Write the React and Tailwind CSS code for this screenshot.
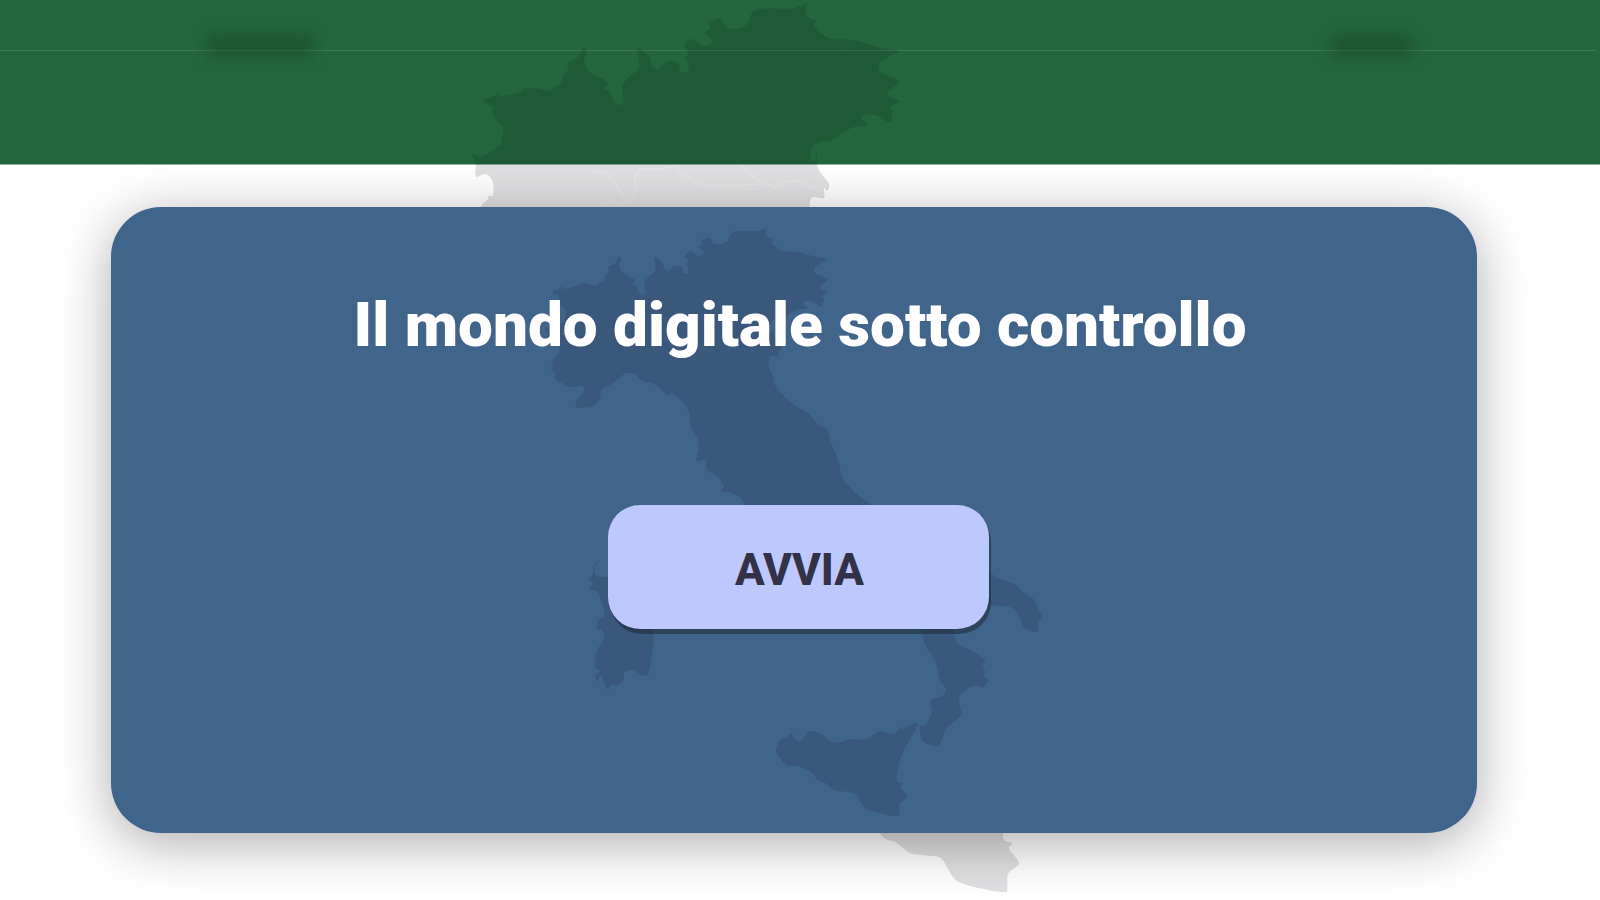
import { useId } from 'react'

// Profili della mappa, coordinate nel viewBox 752x888
const PENISOLA = `0,150 10,152 20,147 29,140 30,134 31,124 24,116 21,110 20,102 13,100 12,95 19,94 27,88 29,92 49,88 51,85
64,84 78,87 82,83 88,81 91,72 97,65 95,59 105,54 111,44 115,47 112,57 117,67 135,78 132,84 139,89 142,98 147,101 152,97
150,84 155,75 166,65 167,57 165,47 167,44 177,52 180,62 186,65 194,58 200,57 207,60 208,67 215,68 217,62 213,54 217,50
212,42 219,35 225,38 230,42 239,40 239,34 233,29 238,24 237,18 249,15 255,24 267,24 275,20 280,9 289,5 302,4 310,5 322,4
335,0 333,7 337,14 344,17 342,22 350,30 360,35 380,36 410,44 427,47 417,53 407,60 409,69 427,77 415,90 427,97 418,103
421,107 419,117 415,118 407,112 395,110 389,114 396,121 382,123 372,128 360,136 347,138 340,144 339,156 343,157 345,147
346,164 357,180 355,187 352,184 352,194 342,193 338,197 338,210 345,225 346,235 355,248 375,266 395,278 405,288 412,297
422,301 428,310 433,328 443,351 448,374 460,391 493,418 540,430 575,425 570,445 620,480 674,522 687,530 709,538 719,548
737,560 743,572 751,587 745,595 745,608 740,610 724,604 714,583 704,573 674,570 640,575 618,590 618,615 626,630 644,638
664,653 661,661 665,671 662,677 669,683 661,694 647,691 629,703 625,716 628,736 606,756 596,780 584,781 570,774 566,754
576,749 584,731 582,714 601,706 605,696 596,681 589,653 576,633 569,613 560,590 520,560 500,520 440,500 400,470 340,450
303,419 294,406 279,399 264,398 270,390 259,374 244,365 242,350 229,352 232,331 229,316 220,301 217,276 206,260 191,249
186,253 166,236 148,232 136,221 123,219 110,228 100,236 85,244 83,258 70,270 48,271 47,263 59,245 55,238 40,240 17,229
15,218 9,215 13,206 9,202 16,195 16,192 21,191 21,179 17,172 12,170 5,173 3,169 4,159`

const SICILIA = `349,791 355,774 366,769 371,762 377,771 387,774 397,761 407,760 418,765 433,776 443,777 460,772 485,772
506,760 528,764 536,754 541,757 558,748 563,751 546,781 536,804 531,834 540,839 537,845 547,859 536,870 535,887 528,888
516,886 485,877 470,855 460,852 438,849 425,839 412,834 402,822 380,812 365,811`

const SARDEGNA = `82,502 75,510 75,520 80,525 100,526 125,505 150,500 165,530 160,570 164,608 163,633 156,673 146,675
133,667 120,671 118,683 108,692 100,689 94,697 85,676 79,684 75,676 83,669 75,662 79,638 90,618 85,607 79,607 80,593
90,585 86,567 80,550 67,546 73,537 67,531 72,522 74,508`

const CONFINI = [
  '31,122 48,119 64,119 72,120 78,111 78,98',
  '127,86 120,96 119,108 124,122 131,134 118,140 113,147 115,157 122,168 134,169 144,181 152,194 152,203 163,190 163,174 169,165 187,165 204,162 207,168 220,175 230,181 260,181 294,180 304,183 317,177 330,178 352,190',
  '243,55 242,72 236,88 236,98 242,105 258,102 264,112 271,116 277,112 282,99 294,90 316,84 322,74 317,60',
  '258,102 246,116 244,140 262,154 287,177 304,183',
  '374,38 368,60 349,65 356,80 353,95 362,107 380,106 390,112',
  '133,203 139,197 152,203 180,214 215,226 250,232'
]

// curva morbida che passa per tutti i punti
function curva(testo, chiusa) {
  const p = testo.trim().split(/\s+/).map(c => c.split(',').map(Number))
  const n = p.length
  const at = i => (chiusa ? p[(i + n) % n] : p[Math.max(0, Math.min(n - 1, i))])
  let d = `M${p[0]}`
  for (let i = 0; i < (chiusa ? n : n - 1); i++) {
    const [a, b, c, e] = [at(i - 1), at(i), at(i + 1), at(i + 2)]
    d += `C${b[0] + (c[0] - a[0]) / 7},${b[1] + (c[1] - a[1]) / 7} ${c[0] - (e[0] - b[0]) / 7},${c[1] - (e[1] - b[1]) / 7} ${c}`
  }
  return chiusa ? d + 'Z' : d
}

function Italia({ className }) {
  const id = useId()
  return (
    <svg viewBox="0 0 752 888" className={className} aria-hidden="true">
      <mask id={id} maskUnits="userSpaceOnUse" x="0" y="0" width="752" height="888">
        <rect width="752" height="888" fill="white" />
        {CONFINI.map(c => <path key={c} d={curva(c, false)} fill="none" stroke="#d8d8d8" strokeWidth="1.5" />)}
      </mask>
      <g mask={`url(#${id})`} fill="#060614" fillOpacity="0.125">
        <path d={curva(PENISOLA, true)} />
        <path d={curva(SICILIA, true)} />
        <path d={curva(SARDEGNA, true)} />
      </g>
    </svg>
  )
}

// Barra verde in alto, con le due voci sfocate
function Testata() {
  return (
    <header className="h-[165px] border-b border-[#8fb59c] bg-[#23663c]">
      <div className="mr-1 flex h-[51px] items-end justify-between border-b border-[#3e7953] pr-[182px] pl-[206px]">
        <span className="-mb-2 h-6 w-[108px] rounded-sm bg-[#184628]/50 blur-[8px]" />
        <span className="-mb-2 h-6 w-[84px] rounded-sm bg-[#184628]/50 blur-[8px]" />
      </div>
    </header>
  )
}

export default function App() {
  return (
    <div className="relative min-h-screen overflow-hidden bg-white font-['Roboto',sans-serif]">
      <Testata />
      <Italia className="pointer-events-none absolute top-1 left-[53%] h-[888px] -translate-x-1/2" />
      <main className="relative pt-[42px] pr-[123px] pb-[67px] pl-[111px]">
        <section className="relative flex min-h-[626px] flex-col items-center rounded-[50px] bg-[#41648b] pt-[78px] pl-3 shadow-[0_10px_54px_rgba(0,0,0,0.33)]">
          <Italia className="pointer-events-none absolute top-[21px] left-1/2 h-[588px] -translate-x-1/2" />
          <h1 className="relative text-center text-[62px] leading-[80px] font-black text-white">
            Il mondo digitale sotto controllo
          </h1>
          <button
            type="button"
            className="relative mt-[140px] mr-1 h-[124px] w-[381px] cursor-pointer rounded-[32px] bg-[#bdc8fc] pt-[6px] pl-[3px] text-[44px] font-extrabold text-[#323148] shadow-[2px_5px_0_rgba(25,35,45,0.5)]"
          >
            AVVIA
          </button>
        </section>
      </main>
    </div>
  )
}
